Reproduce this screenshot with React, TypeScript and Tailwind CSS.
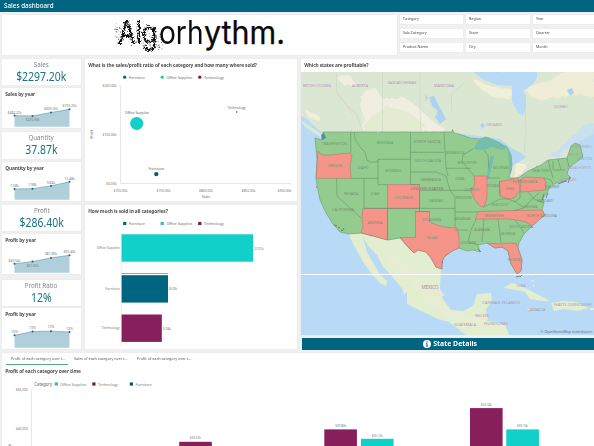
import type { ReactNode } from "react";

const TEAL = "#006580";
const CYAN = "#11cfc9";
const PLUM = "#871f5c";

type LabelProps = {
  x: number;
  y: number;
  w?: number;
  s?: number;
  a?: "start" | "middle" | "end";
  fill?: string;
  children: string;
};

function Label({ x, y, w, s = 3.8, a = "middle", fill = "#777", children }: LabelProps) {
  return (
    <text x={x} y={y} fontSize={s} textAnchor={a} fill={fill} textLength={w} lengthAdjust="spacingAndGlyphs">
      {children}
    </text>
  );
}

function Card({ className, children }: { className: string; children?: ReactNode }) {
  return <section className={"shrink-0 bg-white shadow-[0_0_1px_#dedede] " + className}>{children}</section>;
}

function Title({ children }: { children: string }) {
  return (
    <h2 className="flex h-[13px] shrink-0 origin-left scale-x-[0.93] items-center whitespace-nowrap pl-[3.5px] text-[5.2px] leading-none font-bold tracking-[-0.12px] text-[#4e4e4e]">
      {children}
    </h2>
  );
}

function Kpi({ label, value, className }: { label: string; value: string; className: string }) {
  return (
    <Card className={"flex flex-col items-center pt-[1.5px] whitespace-nowrap " + className}>
      <span className="scale-x-90 text-[6.9px] leading-[8px] text-[#858585]">{label}</span>
      <span className="scale-x-[0.83] text-[12.6px] leading-[15px] text-[#1b7288]">{value}</span>
    </Card>
  );
}

type Spark = { title: string; top: number; height: number; ys: number[]; labels: string[]; ly: number[] };

function SparkCard({ d, className }: { d: Spark; className: string }) {
  const xs = [14.5, 32.5, 51, 69.5];
  const pts = xs.map((x, i) => x + "," + (d.ys[i] - d.top)).join(" ");
  return (
    <Card className={"flex flex-col " + className}>
      <Title>{d.title}</Title>
      <svg viewBox={`2 13 79 ${d.height - 13}`} className="w-[79px] min-h-0 flex-1" preserveAspectRatio="none">
        <polygon points={`14.5,${d.height - 1.3} ${pts} 69.5,${d.height - 1.3}`} fill="#b0cfda" />
        <polyline points={pts} fill="none" stroke="#5d98aa" strokeWidth="0.6" />
        {xs.map((x, i) => (
          <g key={x}>
            <circle cx={x} cy={d.ys[i] - d.top} r="1" fill="#1c6478" />
            <Label x={x} y={d.ly[i] - d.top} w={d.labels[i].length > 7 ? 14 : d.labels[i].length > 6 ? 12 : d.labels[i].length > 5 ? 10.5 : d.labels[i].length > 3 ? 8.5 : 7} s={3.7}>
              {d.labels[i]}
            </Label>
          </g>
        ))}
      </svg>
    </Card>
  );
}

const sparks: Spark[] = [
  { title: "Sales by year", top: 88, height: 40, ys: [115.6, 116, 112.5, 109.3], labels: ["$484.22k", "$470.50k", "$609.20k", "$733.20k"], ly: [113.6, 121.3, 110, 107.4] },
  { title: "Quantity by year", top: 162, height: 39, ys: [189, 188.7, 185.9, 181.8], labels: ["7.58k", "7.98k", "9.84k", "12.48k"], ly: [187, 185.6, 183.6, 179.8] },
  { title: "Profit by year", top: 234, height: 40, ys: [263.8, 261.6, 257.9, 255.3], labels: ["$49.54k", "$61.62k", "$81.80k", "$93.40k"], ly: [261.8, 266.8, 255.4, 253.3] },
  { title: "Profit by year", top: 308, height: 41, ys: [335.3, 331.6, 331.2, 332], labels: ["10%", "13%", "13%", "13%"], ly: [332.9, 329.2, 328.3, 329.8] },
];

function Legend({ y, square }: { y: number; square?: boolean }) {
  const items = [
    { x: 124.7, t: "Furniture", w: 16, c: TEAL },
    { x: 162.2, t: "Office Supplies", w: 26, c: "#24c4c0" },
    { x: 199.8, t: "Technology", w: 20, c: "#6d1a4c" },
  ];
  return (
    <g>
      {items.map((i) => (
        <g key={i.t}>
          <rect x={i.x - 1.6} y={y - 1.6} width="3.2" height="3.2" rx={square ? 0 : 1.6} fill={i.c} />
          <Label x={i.x + 4.2} y={y + 1.4} w={i.w} s={4.2} a="start" fill="#6b6b6b">{i.t}</Label>
        </g>
      ))}
    </g>
  );
}

function Scatter() {
  return (
    <svg viewBox="85 72 212 129" className="h-[129px] w-[212px]">
      <Legend y={77.2} />
      <path d="M120.5 85.5V183.5H291M119 85.5h1.5M119 134.3h1.5M163.5 183.5v1.5M206 183.5v1.5M248.5 183.5v1.5M290.5 183.5v1.5" stroke="#ddd" strokeWidth="0.7" fill="none" />
      <Label x={116.5} y={86.9} w={14} a="end">$200.00k</Label>
      <Label x={116.5} y={135.7} w={14} a="end">$100.00k</Label>
      <Label x={116.5} y={184.7} w={10.5} a="end">$0.00k</Label>
      <g transform="translate(93 134) rotate(-90)">
        <Label x={0} y={0} w={9} s={4.2} fill="#666">Profit</Label>
      </g>
      <Label x={120.5} y={192.2} w={14}>$700.00k</Label>
      <Label x={163.5} y={192.2} w={14}>$750.00k</Label>
      <Label x={206} y={192.2} w={14}>$800.00k</Label>
      <Label x={248.5} y={192.2} w={14}>$850.00k</Label>
      <Label x={284.5} y={192.2} w={14}>$900.00k</Label>
      <Label x={206} y={197.8} w={8.5} s={4.2} fill="#666">Sales</Label>
      <circle cx="136.7" cy="123.4" r="6.5" fill={CYAN} />
      <circle cx="156.3" cy="174.1" r="2.2" fill="#08606f" />
      <circle cx="236.7" cy="112" r="0.8" fill="#6d3a58" />
      <Label x={137} y={114.4} w={24} s={4.2} fill="#666">Office Supplies</Label>
      <Label x={156.3} y={169.6} w={15.5} s={4.2} fill="#666">Furniture</Label>
      <Label x={236.7} y={109} w={18} s={4.2} fill="#666">Technology</Label>
    </svg>
  );
}

function SoldBars() {
  return (
    <svg viewBox="85 218 212 131" className="h-[131px] w-[212px]">
      <Legend y={223.5} square />
      <path d="M121.3 234V346" stroke="#ddd" strokeWidth="0.6" />
      <rect x="121.6" y="234.3" width="131.4" height="27.4" fill={CYAN} />
      <rect x="121.6" y="273" width="46.4" height="0.9" fill="#6ea9b8" />
      <rect x="121.6" y="275.2" width="46.4" height="27.4" fill={TEAL} />
      <rect x="121.6" y="314.5" width="40.2" height="27.4" fill={PLUM} />
      <Label x={119.8} y={249.1} w={23} a="end" s={4.2}>Office Supplies</Label>
      <Label x={119.8} y={290.1} w={14.5} a="end" s={4.2}>Furniture</Label>
      <Label x={119.8} y={329.1} w={18} a="end" s={4.2}>Technology</Label>
      <Label x={259} y={249.5} w={9.5}>22.91k</Label>
      <Label x={173.3} y={290.3} w={8}>8.03k</Label>
      <Label x={167} y={329.5} w={8}>6.94k</Label>
    </svg>
  );
}

const places: [string, number, number, number][] = [
  ["BRITISH COLUMBIA", 317, 87, 28], ["ALBERTA", 360, 87, 16], ["SASKATCHEWAN", 402, 83.5, 29], ["MANITOBA", 444, 87, 20],
  ["ONTARIO", 494, 125.5, 16], ["QUÉBEC", 561, 107.5, 14],
  ["WASHINGTON", 335, 144.5, 24], ["MONTANA", 385, 144, 17], ["NORTH DAKOTA", 427, 143, 27], ["SOUTH DAKOTA", 428, 162, 26],
  ["OREGON", 335, 167, 15], ["IDAHO", 363, 169, 11], ["WYOMING", 393, 172, 16], ["NEVADA", 351, 195, 14], ["UTAH", 375, 195, 9],
  ["NEBRASKA", 431, 181, 20], ["COLORADO", 404, 199, 18], ["KANSAS", 436, 202, 14], ["CALIFORNIA", 343, 211, 22],
  ["ARIZONA", 375, 224, 15], ["OKLAHOMA", 432, 221, 19], ["TEXAS", 432, 239, 11], ["MINNESOTA", 455, 153.5, 19],
  ["WISCONSIN", 467, 163.5, 19], ["MICHIGAN", 501, 169, 16], ["IOWA", 460, 180, 9], ["ILLINOIS", 472, 191, 14],
  ["INDIANA", 493, 187, 12], ["OHIO", 510, 190, 9], ["MISSOURI", 464, 199, 16], ["PENNSYLVANIA", 525, 183, 25],
  ["NEW YORK", 541, 172, 18], ["MAINE", 574, 155.5, 10], ["VIRGINIA", 530, 208, 15], ["KENTUCKY", 500, 206, 17],
  ["TENNESSEE", 494, 216.5, 20], ["ARKANSAS", 463, 220, 16], ["ALABAMA", 482, 231, 16], ["GEORGIA", 508, 235, 15],
  ["LOUISIANA", 468, 244, 16], ["SOUTH CAROLINA", 521, 228, 24], ["NORTH CAROLINA", 542, 217, 30], ["FLORIDA", 514, 261, 13],
  ["NEW BRUNSWICK", 582, 147.5, 20], ["NOVA SCOTIA", 585, 159.5, 14], ["MASSACHUSETTS", 579, 169, 24],
  ["RHODE ISLAND", 568, 181, 17], ["NEW JERSEY", 552, 188, 15], ["MARYLAND", 545, 202, 16],
];

const southPlaces: [string, number, number, number][] = [
  ["CUBA", 521, 286.5, 9], ["CAYMAN ISLANDS", 501, 303.5, 38], ["JAMAICA", 537, 310.5, 17], ["HAITI", 560, 306, 12],
  ["DOMINICAN REP.", 580, 306, 25], ["BELIZE", 482, 317, 14], ["GUATEMALA", 465, 325.5, 22], ["HONDURAS", 496, 325, 24],
];

function UsMap() {
  const us =
    "M323 132H449L452 132L452.5 129.5L454.5 133L462 135L470 138L480 139L486 137L495 141L507 147L511 155L512 166L509 178L518 178L528 171L541 165L548 160L567 158L571 146L575 143L580 145L583 157L575 163L569 168L567 174L571 178L565 181L556 183L550 187L547 193L543 198L544 203L542 210L545 215L541 218L532 226L524 234L519 243L518 248L522 260L521 271L517 274L511 264L508 251L502 247L495 248L487 243L478 245L480 252L473 250L467 251L459 248L452 251L444 257L442 262L442 269L436 267L431 258L426 252L418 250L414 253L408 247L400 238L388 240L361 233L349 234L340 232L333 224L326 213L320 200L317 185L316 178L317 160L315 138L322 140Z";
  const land =
    "M301 72H594V133L584 139L575 143L567 158L548 160L541 165L528 171L518 178L509 178L512 166L507 147L486 137L449 132H322L314 126L306 118L301 116Z";
  return (
    <svg viewBox="301 72 293 263" className="block h-[263px] w-full">
      <defs>
        <filter id="ragged">
          <feTurbulence type="fractalNoise" baseFrequency="0.18" numOctaves="2" seed="3" />
          <feDisplacementMap in="SourceGraphic" scale="5" />
        </filter>
        <filter id="coast">
          <feTurbulence type="fractalNoise" baseFrequency="0.2" numOctaves="2" seed="5" />
          <feDisplacementMap in="SourceGraphic" scale="1.6" xChannelSelector="R" yChannelSelector="G" />
        </filter>
        <clipPath id="landClip"><path d={land} /></clipPath>
      </defs>
      <rect x="301" y="72" width="293" height="263" fill="#b9daf6" />
      <path d={land} fill="#dce7d3" />
      <g clipPath="url(#landClip)">
        <g filter="url(#ragged)">
          <path d="M336 77L350 76L356 85L345 86ZM363 92L375 88L382 98L395 98L402 96L414 104L426 115L436 124L445 128L440 132H362L364 118L360 106Z" fill="#f0eee0" />
          <path d="M366 120L388 106L408 112L426 126L418 132H364Z" fill="#e3ebd2" />
          <path d="M525 88L548 80L566 72H594V97L578 94L560 98L540 100L530 96Z" fill="#f0edd6" />
          <path d="M472 79L492 86L512 90L511 99L494 97L482 90ZM305 110L319 116L321 121L308 117Z" fill="#eff0d8" />
          <path d="M594 123L580 128L570 138L562 147L548 156L558 157L573 145L594 139Z" fill="#c9e0ee" />
          <path d="M516 163L526 163L522 174L514 180Z" fill="#f5efd9" />
        </g>
        <path d="M473 72L484 80L497 85L512 86L512 102L518 112L523 116L526 108L526 95L523 91L532 85L537 78L537 72Z" fill="#b9daf6" filter="url(#coast)" />
        <path d="M429 97L434 96L438 104L443 113L446 119L440 124L435 117L438 111L432 106ZM425 94L428 98L426 101ZM567 90l5-2 2 5-4 3ZM480 125l3-2 2 3-3 3Z" fill="#acd3f1" filter="url(#coast)" />
        <path d="M486 137L500 139L511 148L521 153L526 157L519 162L512 166L507 148Z" fill="#b3d8ef" />
      </g>
      <path d="M336.5 72V91L344 102L357 115L363 132M382.5 72V132M420 72V110L421 132M451.5 111V94L465 82M525 103L526 132L524 153" fill="none" stroke="#c7d1be" strokeWidth="0.5" />
      <path d="M336.5 93L346 104L352 113" fill="none" stroke="#e4c6b9" strokeWidth="0.7" />
      <path d="M301 120L309 126L317 131L324 135L322 138L314 133L304 126Z" fill="#dfe8d6" />

      <g fill="#e3edcf" filter="url(#coast)">
        <path d="M349 234L361 233L388 240L400 238L408 247L414 253L418 250L426 252L431 258L436 267L441 269L440 288L443 299L451 310L463 311L473 306L477 294L491 293L492 300L486 310L488 321L505 324L509 335H466L449 322L438 319L421 311L407 304L407 293L400 286L391 275L383 267L377 255L368 246L363 237L367 252L374 264L380 275L387 281L386 286L380 283L371 273L362 260L357 251L353 244Z" />
        <path d="M503 288L512 283L523 287L535 293L550 301L542 301L530 299L525 292L511 289ZM551 303L562 301L577 302L588 308L577 311L563 309L554 311ZM527 308l6 1-4 2ZM590 308h4v2h-4Z" />
      </g>
      <path d="M391 257L407 270L418 285L429 296L444 310L459 318L481 321" fill="none" stroke="#eceed8" strokeWidth="8" opacity="0.5" filter="url(#ragged)" />
      <path d="M362 258l7 1 2 5-7-1Z" fill="#f6e8c9" />
      <path d="M430 284l7 2 8 10-6-1ZM402 285l4 7-2 3Z" fill="#f1e6da" />

      <g filter="url(#coast)">
        <path d={us} fill="#94cb8f" stroke="#6b9a6c" strokeWidth="0.6" />
      </g>
      <path d="M322 140L326 138L324 133L321 135ZM440 260l3-4v8Z" fill="#4f8da6" />
      <path d="M473 149L480 139L488 137L499 142L508 148L502 150L492 147L484 150ZM491 156L494 156L492 166L489 178L487 178L488 164ZM507 149L512 158L512 170L509 176L509 160Z" fill="#74bdae" filter="url(#coast)" />

      <g fill="#f5958a" stroke="#a87168" strokeWidth="0.5">
        <path d="M318 151L322 155L330 155L338 154L350 153L352 156L350 165L351 178.3H316.3L317 163Z" />
        <path d="M387.5 184.6H419.5V208.4H387.5Z" />
        <path d="M363 208.4H387.5V240L361 232.6L363 226L361.8 218Z" />
        <path d="M415.5 211.5H429.5V222L437 225L444 227L457 228L459 237V248L452 251L444 257L442 262L442 269L436 267L431 258L426 252L418 250L414 253L408 247L400 237.5H415.5Z" />
        <path d="M474 176H487V198L484 207L480 206L475 200L471 191L475 184Z" />
        <path d="M499.5 181.5L509 180L518 177.5L520 190L514 198L508 199L500 196Z" />
        <path d="M520 180L525 177L544 178L546 183L545 190L521 192Z" />
        <path d="M478 211.5L510 210.5L542 210L545 215L541 218L532 226L526 222L517 220L509 219H475.5Z" />
        <path d="M487 243L501 244L508 243L516 243.5L518 248L522 260L521 271L517 274L511 264L508 251L502 247L495 248Z" />
      </g>
      <path d="M410.5 132V184.6M354 132L355 139L360 147L365 152L367 160L370 162L377 162L378 159.3H410.5M378 159.3V184.6H387.5M350.7 132V153M351 178.3H378M336.5 178.3L337 196L361 218M364 178.3V208.4H387.5M387.5 208.4V240M387.5 208.4H455M410.5 152.3H444M410.5 172H436L446 176L450 190.3H419.5M419.5 184.6H410.5M419.5 190.3V211.5M444 132L445 150L446 168.3H471M446 168.3L448 176M450 190.3H470L472 187M450 190.3L455 197V212H478M455 212V228M455 230H468M476 219L471 230L468 242L478 245M484 219L482 242M498 219L501 243M515 220L524 233M499.5 181L500 196M487 178H500M473 149L463 155L462 161L469 170L474 176M484 150L488 155L489 169M484 207L500 199L508 199L516 202L524 208L514 210.5M524 208L532 199L539 193M520 190V198L514 202M528 192L534 199L544 203M544 178L551 180M548 160L553 178M553 161V170H565M558 159L561 170M567 158L569 167M551 180L553 184M545 190L551 187M429.5 211.5H415.5" fill="none" stroke="#648f66" strokeWidth="0.55" />
      <path d="M334 225l3 .5M338 227l2 1M341 230l2 .7M343 228l1 2M544 194l-2 6M546 198l2-5M558 184l8-3M570 177l-2 6M478 249l3 3M516 277l4-1M520 277l2-2" stroke="#4a6d5c" strokeWidth="0.7" />
      <path d="M530 274l2 2M531 280l4 2M533 284l1 3" stroke="#e7efda" strokeWidth="1" />
      <g>
        {places.map(([t, x, y, w]) => (
          <Label key={t} x={x} y={y} w={w} s={3} fill={x > 565 || y < 130 ? "#b79ab8" : "#76936f"}>{t}</Label>
        ))}
        {southPlaces.map(([t, x, y, w]) => (
          <Label key={t} x={x} y={y} w={w} s={3.5} fill="#b09ab4">{t}</Label>
        ))}
      </g>
      <Label x={427} y={190} w={33} s={3.8} fill="#946a70">UNITED STATES</Label>
      <Label x={430} y={289.3} w={17} s={4.4} fill="#9a919c">MEXICO</Label>
      <rect x="301" y="274" width="293" height="1" fill="#fff" />
      <Label x={540.5} y={333} w={52} s={4} a="start" fill="#5c6c77">© OpenStreetMap contributors</Label>
    </svg>
  );
}

function Logo() {
  const dots: [number, number, number][] = [];
  let seed = 41;
  const rnd = () => {
    seed = (seed * 16807) % 2147483647;
    return seed / 2147483647;
  };
  for (let i = 0; i < 130; i++) {
    const t = rnd();
    dots.push([115 + t * 48, 23 + t * 12 + rnd() * 16, 0.25 + rnd() * 0.3]);
  }
  return (
    <svg viewBox="2 15 395 40" className="h-10 w-[395px] overflow-visible">
      <defs>
        <filter id="scatter" x="-10%" y="-20%" width="120%" height="140%">
          <feTurbulence type="fractalNoise" baseFrequency="0.8" numOctaves="2" seed="2" />
          <feDisplacementMap in="SourceGraphic" scale="6" xChannelSelector="R" yChannelSelector="G" />
        </filter>
        <filter id="rough">
          <feTurbulence type="fractalNoise" baseFrequency="0.6" numOctaves="1" seed="6" />
          <feDisplacementMap in="SourceGraphic" scale="2" xChannelSelector="R" yChannelSelector="G" />
        </filter>
      </defs>
      <g fontFamily="Inter, sans-serif" fontSize="32" fill="#0a0a0a">
        <text x="118" y="43.5" textLength="39.5" lengthAdjust="spacingAndGlyphs" filter="url(#scatter)">Alg</text>
        <text x="159" y="43.5" textLength="44.5" lengthAdjust="spacingAndGlyphs" filter="url(#rough)">orh</text>
        <text x="204" y="43.5" textLength="81" lengthAdjust="spacingAndGlyphs" stroke="#0a0a0a" strokeWidth="0.25">ythm.</text>
      </g>
      {dots.map(([x, y, r], i) => (
        <circle key={i} cx={x} cy={y} r={r} fill="#222" />
      ))}
    </svg>
  );
}

function TimeChart() {
  return (
    <svg viewBox="2 378 592 68" className="h-[68px] w-[592px]">
      <Label x={34.5} y={386} w={17.5} s={4.9} a="start" fill="#666">Category</Label>
      <rect x="54.7" y="382.4" width="3.2" height="3.2" fill="#2dbdbb" />
      <Label x={60.3} y={385.6} w={26} s={4.2} a="start">Office Supplies</Label>
      <rect x="92.3" y="382.4" width="3.2" height="3.2" fill="#6d1a4c" />
      <Label x={98} y={385.6} w={20} s={4.2} a="start">Technology</Label>
      <rect x="129.8" y="382.4" width="3.2" height="3.2" fill="#075870" />
      <Label x={135.5} y={385.6} w={16} s={4.2} a="start">Furniture</Label>
      <path d="M31.5 389.5V446" stroke="#ddd" strokeWidth="0.7" />
      <Label x={27.8} y={391.2} w={12} a="end">$60,000</Label>
      <Label x={27.8} y={430.2} w={12} a="end">$40,000</Label>
      <g transform="translate(10.7 448.7) rotate(-90)">
        <Label x={0} y={0} w={9} s={4.2} fill="#555">Profit</Label>
      </g>
      <rect x="179.2" y="441.8" width="32.6" height="5" fill={PLUM} />
      <rect x="324.3" y="429.4" width="32.6" height="17" fill={PLUM} />
      <rect x="361" y="438.8" width="32.6" height="8" fill={CYAN} />
      <rect x="470" y="408.1" width="32.6" height="38" fill={PLUM} />
      <rect x="506.3" y="429.4" width="32.6" height="17" fill={CYAN} />
      <Label x={195.3} y={439.1} w={11}>$33.50k</Label>
      <Label x={340.8} y={427.2} w={11}>$39.80k</Label>
      <Label x={377.2} y={436.7} w={11}>$35.12k</Label>
      <Label x={486.2} y={405.7} w={11}>$50.74k</Label>
      <Label x={522.5} y={427.2} w={11}>$39.74k</Label>
    </svg>
  );
}

const filters = ["Category", "Region", "Year", "Sub-Category", "State", "Quarter", "Product Name", "City", "Month"];

function Tab({ children, active }: { children: string; active?: boolean }) {
  return (
    <span className={"flex w-[62px] items-center border-b pl-[5px] " + (active ? "border-[#4fae7c]" : "border-transparent")}>
      <span className="origin-left scale-x-[0.86]">{children}</span>
    </span>
  );
}

export default function App() {
  return (
    <main className="flex h-[446px] w-[594px] flex-col overflow-hidden bg-[#f0f0f0] font-['Noto_Sans','Open_Sans',sans-serif]">
      <header className="flex h-3 shrink-0 items-center bg-[#006580] pl-1">
        <h1 className="origin-left scale-x-[0.93] text-[6.8px] leading-none font-medium text-white">Sales dashboard</h1>
      </header>
      <div className="flex h-[47px] shrink-0 gap-[3px] pt-[3px] pl-[2px]">
        <Card className="h-10 w-[395px]">
          <Logo />
        </Card>
        <div className="grid h-[38px] grid-cols-[63px_64px_64px] grid-rows-[9px_9px_9px] gap-x-[3px] gap-y-[5px]">
          {filters.map((f) => (
            <div key={f} className="flex items-center bg-white pl-[3px] text-[4.2px] leading-none font-medium whitespace-nowrap text-[#5c5c5c] shadow-[0_0_1px_#dedede]">
              <span className="origin-left scale-x-[0.87]">{f}</span>
            </div>
          ))}
        </div>
      </div>
      <div className="flex h-[291px] shrink-0 pl-[2px]">
        <div className="flex w-[79px] shrink-0 flex-col">
          <Kpi label="Sales" value="$2297.20k" className="h-[26px]" />
          <SparkCard d={sparks[0]} className="mt-[3px] h-[40px]" />
          <Kpi label="Quantity" value="37.87k" className="mt-1 h-[27px]" />
          <SparkCard d={sparks[1]} className="mt-[3px] h-[39px]" />
          <Kpi label="Profit" value="$286.40k" className="mt-1 h-[26px]" />
          <SparkCard d={sparks[2]} className="mt-[3px] h-[40px]" />
          <Kpi label="Profit Ratio" value="12%" className="mt-[6px] h-[26px]" />
          <SparkCard d={sparks[3]} className="mt-[2px] h-[41px]" />
        </div>
        <div className="ml-1 flex w-[212px] shrink-0 flex-col gap-1">
          <Card className="h-[142px]">
            <Title>What is the sales/profit ratio of each category and how many where sold?</Title>
            <Scatter />
          </Card>
          <Card className="h-[144px]">
            <Title>How much is sold in all categories?</Title>
            <SoldBars />
          </Card>
        </div>
        <div className="ml-1 flex w-[293px] shrink-0 flex-col">
          <Card className="h-[276px]">
            <Title>Which states are profitable?</Title>
            <UsMap />
          </Card>
          <button className="mt-[3px] ml-px flex h-[12px] w-[292px] items-center justify-center gap-[1px] bg-[#006580] pl-[5px] text-[7.3px] leading-none font-bold whitespace-nowrap text-white">
            <svg viewBox="0 0 16 16" className="size-[8px]">
              <circle cx="8" cy="8" r="8" fill="#fff" />
              <circle cx="8" cy="4" r="1.5" fill={TEAL} />
              <path d="M6.3 7.2H8V12M5.9 12.2h4.2" fill="none" stroke={TEAL} strokeWidth="1.9" />
            </svg>
            <span className="scale-x-95">State Details</span>
          </button>
        </div>
      </div>
      <Card className="mt-[3px] ml-[2px] flex h-[93px] w-[592px] flex-col">
        <nav className="flex h-[12px] shrink-0 gap-[1px] pl-[3.5px] text-[4.3px] leading-none font-medium whitespace-nowrap text-[#707070]">
          <Tab active>Profit of each category over t...</Tab>
          <Tab>Sales of each category over t...</Tab>
          <Tab>Profit of each category over t...</Tab>
        </nav>
        <Title>Profit of each category over time</Title>
        <TimeChart />
      </Card>
    </main>
  );
}
